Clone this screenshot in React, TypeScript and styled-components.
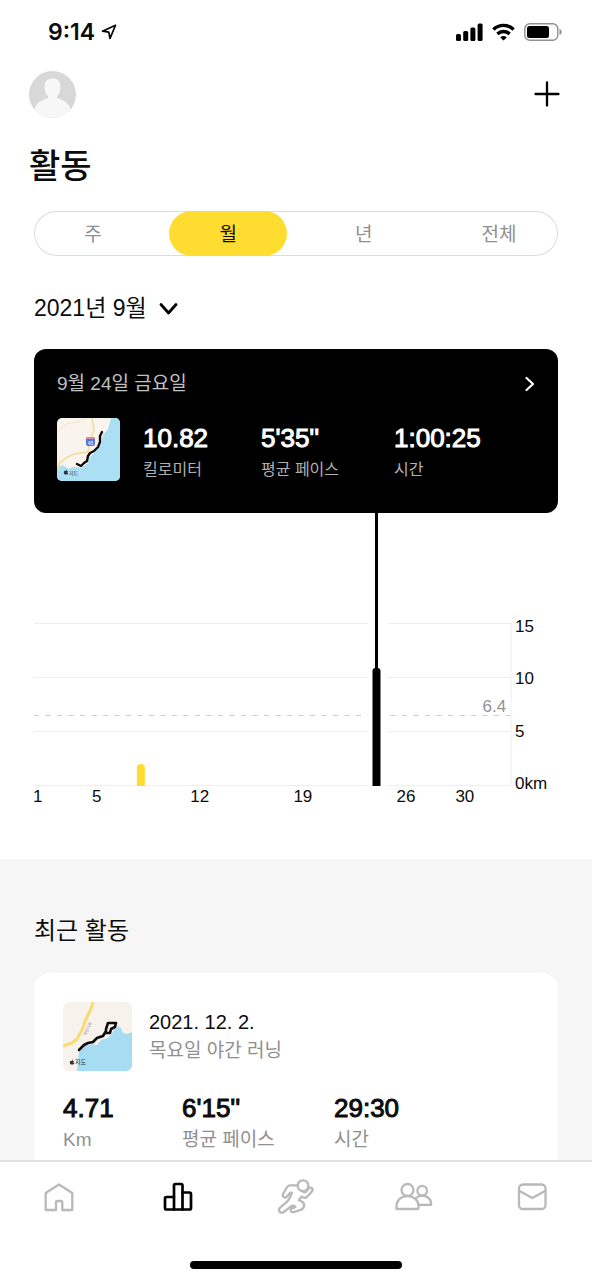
import React, { useState } from "react";
import styled, { createGlobalStyle } from "styled-components";
import { FaApple } from "react-icons/fa";

const GlobalStyle = createGlobalStyle`
  *, *::before, *::after { box-sizing: border-box; }
  body {
    margin: 0;
    background: #fff;
    color: #0c0c0c;
    font-family: "Liberation Sans", "Noto Sans CJK KR", sans-serif;
  }
  button, select { font: inherit; color: inherit; border: 0; background: none; padding: 0; margin: 0; cursor: pointer; }
  h1, h2, p, dl, dt, dd { margin: 0; font-weight: 400; }
  svg { display: block; }
`;

const Screen = styled.div`
  display: flex;
  flex-direction: column;
  height: 100vh;
`;

const StatusBar = styled.div`
  display: flex;
  flex: none;
  align-items: center;
  justify-content: space-between;
  height: 64px;
  padding: 0 30px 0 48px;
`;

const Clock = styled.div`
  display: flex;
  align-items: center;
  gap: 6px;
  font: 600 23px/32px Inter, sans-serif;
`;

const StatusIcons = styled.div`
  display: flex;
  align-items: center;
  gap: 9px;
`;

const Content = styled.main`
  flex: 1;
  min-height: 0;
  overflow-y: auto;
  scrollbar-width: none;
`;

const Header = styled.header`
  display: flex;
  align-items: center;
  justify-content: space-between;
  height: 60px;
  padding: 0 29px;
`;

const IconButton = styled.button`
  display: grid;
  place-items: center;
  border-radius: 50%;
`;

const Title = styled.h1`
  margin: 18px 29px 0;
  font-size: 34px;
  line-height: 48px;
  font-weight: 500;
`;

const Section = styled.section`
  padding: 0 34px;
`;

const Segmented = styled.div`
  display: flex;
  justify-content: space-between;
  height: 45px;
  margin-top: 21px;
  border-radius: 23px;
  box-shadow: inset 0 0 0 1px #dcdcdc;
`;

const Segment = styled.button<{ $active: boolean }>`
  width: 118px;
  padding-top: 3px;
  border-radius: 23px;
  font-size: 19px;
  line-height: 28px;
  color: ${(p) => (p.$active ? "#0c0c0c" : "#909090")};
  background: ${(p) => (p.$active ? "#ffdc30" : "transparent")};
`;

const MonthPicker = styled.label`
  display: grid;
  width: fit-content;
  align-items: center;
  justify-items: end;
  margin-top: 36px;
  & > * { grid-area: 1 / 1; }
  & > svg { pointer-events: none; }
`;

const MonthSelect = styled.select`
  appearance: none;
  height: 32px;
  padding-right: 31px;
  font-size: 23px;
  line-height: 32px;
`;

const SelectedRun = styled.article`
  margin-top: 25px;
  padding: 22px 23px 28px;
  border-radius: 12px;
  background: #000;
  color: #fff;
`;

const RunDate = styled.button`
  display: flex;
  align-items: center;
  justify-content: space-between;
  width: 100%;
  height: 26px;
  font-size: 19px;
  line-height: 26px;
  color: #c0c0c0;
`;

const RunBody = styled.div`
  display: flex;
  align-items: flex-start;
  gap: 23px;
  margin-top: 21px;
`;

const Stats = styled.dl<{ $columns: string }>`
  display: grid;
  flex: 1;
  grid-template-columns: ${(p) => p.$columns};
`;

const Stat = styled.div`
  display: flex;
  flex-direction: column-reverse;
  gap: 1px;
  padding-top: 4px;
`;

const StatValue = styled.dd`
  font-size: 26px;
  line-height: 32px;
  -webkit-text-stroke: 1px currentColor;
`;

const StatLabel = styled.dt<{ $large?: boolean }>`
  font-size: ${(p) => (p.$large ? 19 : 16)}px;
  line-height: 30px;
  color: ${(p) => (p.$large ? "#909090" : "#b0b0b0")};
`;

const Chart = styled.div`
  display: flex;
  height: 346px;
  font-size: 17px;
`;

const Plot = styled.svg`
  flex: 1;
  min-width: 0;
  height: 300px;
  overflow: visible;
`;

const YAxis = styled.div`
  display: flex;
  flex-direction: column;
  justify-content: space-between;
  width: 47px;
  height: 177px;
  margin-top: 104px;
  padding-left: 4px;
  line-height: 20px;
`;

const Recent = styled.section`
  padding: 53px 34px 40px;
  background: #f6f6f6;
`;

const RecentTitle = styled.h2`
  font-size: 24px;
  line-height: 38px;
`;

const ActivityCard = styled.article`
  margin-top: 23px;
  padding: 29px 29px 32px;
  border-radius: 16px;
  background: #fff;
`;

const ActivityHead = styled.div`
  display: flex;
  align-items: center;
  gap: 17px;
  margin-bottom: 17px;
`;

const ActivityDate = styled.p`
  font-size: 20px;
  line-height: 28px;
`;

const ActivityName = styled.p`
  font-size: 19px;
  line-height: 30px;
  color: #909090;
`;

const TabBar = styled.footer`
  flex: none;
  height: 120px;
  border-top: 2px solid #e2e2e2;
  background: #fff;
`;

const Tabs = styled.nav`
  display: grid;
  grid-template-columns: repeat(5, 1fr);
  height: 70px;
`;

const Tab = styled.button<{ $active?: boolean }>`
  display: grid;
  place-items: center;
  color: ${(p) => (p.$active ? "#000" : "#b9b9b9")};
`;

const HomeIndicator = styled.div`
  width: 212px;
  height: 8px;
  margin: 29px auto 0;
  border-radius: 4px;
  background: #000;
`;

function StatusGlyphs() {
  return (
    <StatusIcons>
      <svg width="27" height="18" viewBox="0 0 27 18">
        <rect x="0" y="11" width="5" height="7" rx="1.5" />
        <rect x="7.2" y="8" width="5" height="10" rx="1.5" />
        <rect x="14.4" y="4.5" width="5" height="13.5" rx="1.5" />
        <rect x="21.6" y="0.5" width="5" height="17.5" rx="1.5" />
      </svg>
      <svg width="23" height="18" viewBox="0 0 23 18" fill="none" stroke="#000" strokeWidth="3.4">
        <path d="M1.4 6.5a14.4 14.4 0 0 1 20.2 0" />
        <path d="M5.4 11a8.8 8.8 0 0 1 12.2 0" />
        <path d="M11.5 17.4 8.3 14.4a4.6 4.6 0 0 1 6.4 0Z" fill="#000" stroke="none" />
      </svg>
      <svg width="38" height="18" viewBox="0 0 38 18">
        <rect x="0.8" y="0.8" width="33" height="16.4" rx="5" fill="none" stroke="#8f8f8f" strokeWidth="1.4" />
        <rect x="3" y="3" width="22" height="12" rx="2.5" />
        <path d="M35.5 6v6c1.4-.6 2.2-1.7 2.2-3s-.8-2.4-2.2-3Z" fill="#8f8f8f" />
      </svg>
    </StatusIcons>
  );
}

function CoastMap() {
  return (
    <svg width="63" height="63" viewBox="0 0 63 63" role="img" aria-label="9월 24일 경로">
      <defs>
        <clipPath id="coast"><rect width="63" height="63" rx="5" /></clipPath>
      </defs>
      <g clipPath="url(#coast)" fill="none">
        <rect width="63" height="63" fill="#f9f5ee" />
        <path d="M54 0 51 11 46 17 44 27 37 35 33 39 31 45 24 50 16 49 11 51 6 47 0 49V63H63V0Z" fill="#aadff4" />
        <path d="M35 0 37 12 33 23 31 34 24 35 17 36 9 40 3 45 0 52" stroke="#f5dea3" strokeWidth="1.8" />
        <path d="M0 14 9 6 20 4 30 0M0 41 5 45" stroke="#f7e6bd" strokeWidth="1" />
        <rect x="29" y="19" width="9" height="9" rx="2" fill="#4f78db" />
        <path d="M29 21a2 2 0 0 1 2-2h5a2 2 0 0 1 2 2Z" fill="#d98ca8" />
        <text x="33.5" y="26.5" fontSize="5" fill="#fff" textAnchor="middle">45</text>
        <path d="M45 14 43 18 43 24 41 29 37 33 33 35 31 38 30 43 27 45 24 48 20 46" stroke="#0c0c0c" strokeWidth="2.4" strokeLinecap="round" strokeLinejoin="round" />
        <FaApple x="6" y="51" size={6} color="#333" />
        <text x="12" y="56.5" fontSize="5" fill="#333">지도</text>
      </g>
    </svg>
  );
}

function BayMap() {
  return (
    <svg width="69" height="69" viewBox="0 0 69 69" role="img" aria-label="12월 2일 경로">
      <defs>
        <clipPath id="bay"><rect width="69" height="69" rx="6" /></clipPath>
      </defs>
      <g clipPath="url(#bay)" fill="none">
        <rect width="69" height="69" fill="#f7f2ec" />
        <path d="M69 30 64 32 60 31 58 26 55 24 52 27 49 31 45 36 38 38 34 43 29 42 22 44 16 50 15 58 14 69H69Z" fill="#a6ddf3" />
        <path d="M30 0 28 7 23 17 19 28 14 37 9 41 0 44" stroke="#f8db70" strokeWidth="3" />
        <text transform="translate(23 34) rotate(-66)" fontSize="4" fill="#9a8fae">해안대로</text>
        <path d="M16 48 21 43 25 41 30 40 34 36 40 34 43 29 43 27 45 21 53 21 52 25 48 27 47 31 43 31" stroke="#0c0c0c" strokeWidth="2.6" strokeLinecap="round" strokeLinejoin="round" />
        <FaApple x="6" y="57" size={6} color="#333" />
        <text x="12" y="62" fontSize="6" fill="#333">지도</text>
      </g>
    </svg>
  );
}

const AXIS_DAYS = [1, 5, 12, 19, 26, 30];
const BASE = 272;
const PX_PER_KM = 10.8;
/* Centre of a day's slot, as a share of the plot's width. */
const dayX = (day: number) => 0.8 + (day - 1) * 3.087;

function ActivityChart() {
  return (
    <Chart>
      <Plot role="img" aria-label="9월 일별 거리">
        {[0, 5, 10, 15].map((km) => (
          <line key={km} x1="0" x2="100%" y1={BASE + 0.5 - km * PX_PER_KM} y2={BASE + 0.5 - km * PX_PER_KM} stroke="#efefef" />
        ))}
        <line x1="100%" x2="100%" y1="110" y2={BASE} stroke="#efefef" />
        <line x1="0" x2="100%" y1="202.5" y2="202.5" stroke="#cccccc" strokeDasharray="5 6.5" />
        <svg x={`${dayX(8)}%`} overflow="visible">
          <path d="M-4 273V255a4 4 0 0 1 8 0V273Z" fill="#ffdc30" />
        </svg>
        <svg x={`${dayX(24)}%`} overflow="visible">
          <rect x="-9" y="100" width="20" height="173" fill="#fff" />
          <rect x="-1.5" y="0" width="3" height="160" />
          <path d="M-4 273V158a3 3 0 0 1 3-3H1a3 3 0 0 1 3 3V273Z" />
        </svg>
        <text x="99%" y="199" textAnchor="end" fill="#929292">6.4</text>
        {AXIS_DAYS.map((day) => (
          <text key={day} x={`${dayX(day)}%`} y="289" textAnchor="middle" fill="#0c0c0c">{day}</text>
        ))}
      </Plot>
      <YAxis>
        <span>15</span>
        <span>10</span>
        <span>5</span>
        <span>0km</span>
      </YAxis>
    </Chart>
  );
}

type StatItem = [value: string, label: string];

function StatList({ items, columns, large }: { items: StatItem[]; columns: string; large?: boolean }) {
  return (
    <Stats $columns={columns}>
      {items.map(([value, label]) => (
        <Stat key={label}>
          <StatLabel $large={large}>{label}</StatLabel>
          <StatValue>{value}</StatValue>
        </Stat>
      ))}
    </Stats>
  );
}

const TAB_ICONS: { label: string; width: number; art: React.ReactNode }[] = [
  {
    label: "홈",
    width: 2.3,
    art: <path d="M6.7 33V16L20 7.5 33.3 16V33H23.3V25.5a1.5 1.5 0 0 0-1.5-1.5H18.5a1.5 1.5 0 0 0-1.5 1.5V33Z" />,
  },
  {
    label: "활동",
    width: 2.7,
    art: (
      <>
        <path d="M16 20H8.5A1.5 1.5 0 0 0 7 21.500V31a1.5 1.5 0 0 0 1.5 1.5H31.5A1.5 1.5 0 0 0 33 31V17a1.5 1.5 0 0 0-1.500-1.5H24.5" />
        <path d="M16 32.5V8.5A1.5 1.5 0 0 1 17.5 7H23A1.5 1.5 0 0 1 24.5 8.5V32.5" />
      </>
    ),
  },
  {
    label: "러닝",
    width: 2.3,
    art: (
      <>
        <circle cx="27" cy="8.7" r="5.400" />
        <path d="M21 8.300H14.300Q12.300 8.300 11.200 10L7.200 16.600C5.600 19.500 9.200 21.800 11.200 19.300L14.200 15.600H16C14.800 19 13 23.200 10.300 25.400L4.400 30.300C1.300 33.200 4 37.200 7.800 35L15 29.300C16.200 28.400 18.600 28.600 19.400 29.800C19 31 16 30.800 15 32.200C14 34 15.400 35.600 17.800 35.100L24 33.200C28.600 31.600 29.400 26.800 26 24.800L22.800 23L25.800 19.500C28 21.600 30 21 31.500 19.200L35.800 14.600C38 11.600 34.800 9.400 32.800 11.600L29.300 15.400L25.400 14" />
      </>
    ),
  },
  {
    label: "커뮤니티",
    width: 2.3,
    art: (
      <>
        <circle cx="13.5" cy="13" r="6" />
        <path d="M2.500 32V29.500C2.500 15.500 24.500 15.500 24.500 29.500V30.500a1.500 1.500 0 0 1-1.500 1.500Z" />
        <circle cx="28.200" cy="13.700" r="4.800" />
        <path d="M22 21.200C28 16.200 37.200 19 37.200 27.800H24.800" />
      </>
    ),
  },
  {
    label: "메시지",
    width: 2.3,
    art: (
      <>
        <rect x="6" y="7.500" width="26.500" height="24.500" rx="4" />
        <path d="M6.500 14 19.300 21 32 14" />
      </>
    ),
  },
];

const PERIODS = ["주", "월", "년", "전체"];

export default function App() {
  const [period, setPeriod] = useState("월");
  return (
    <Screen>
      <GlobalStyle />
      <StatusBar>
        <Clock>
          9:14
          <svg width="16" height="16" viewBox="0 0 16 16" fill="none" stroke="#000" strokeWidth="1.700" strokeLinejoin="round">
            <path d="M14.500 1.200 1.500 7.200 7.800 8.200 9 14.500Z" />
          </svg>
        </Clock>
        <StatusGlyphs />
      </StatusBar>
      <Content>
        <Header>
          <IconButton aria-label="프로필">
            <svg width="47" height="47" viewBox="0 0 47 47">
              <defs>
                <clipPath id="avatar"><circle cx="23.500" cy="23.500" r="23.500" /></clipPath>
              </defs>
              <g clipPath="url(#avatar)">
                <rect width="47" height="47" fill="#d8d8d8" />
                <path d="M15.500 16C15.500 10 18.500 7.500 23.500 7.500S31.500 10 31.500 16C31.500 20.500 29.800 23.500 28 25.200V27C34 29 41.500 32 41.500 40V47H5.500V40C5.500 32 13 29 19 27V25.200C17.200 23.500 15.500 20.500 15.500 16Z" fill="#f7f7f7" />
              </g>
            </svg>
          </IconButton>
          <IconButton aria-label="추가">
            <svg width="32" height="32" viewBox="0 0 32 32" stroke="#000" strokeWidth="2.300" strokeLinecap="round">
              <path d="M4.500 16H27.500M16 4.500V27.500" />
            </svg>
          </IconButton>
        </Header>
        <Title>활동</Title>
        <Section>
          <Segmented>
            {PERIODS.map((name) => (
              <Segment key={name} $active={name === period} aria-pressed={name === period} onClick={() => setPeriod(name)}>
                {name}
              </Segment>
            ))}
          </Segmented>
          <MonthPicker>
            <MonthSelect aria-label="월 선택">
              <option>2021년 9월</option>
            </MonthSelect>
            <svg width="20" height="20" viewBox="0 0 20 20" fill="none" stroke="#000" strokeWidth="2.800" strokeLinecap="round" strokeLinejoin="round">
              <path d="M3 6.500 10.500 15 18 6.500" />
            </svg>
          </MonthPicker>
          <SelectedRun>
            <RunDate>
              9월 24일 금요일
              <svg width="10" height="16" viewBox="0 0 10 16" fill="none" stroke="#fff" strokeWidth="2.200" strokeLinecap="round" strokeLinejoin="round">
                <path d="M1.500 2 8 8 1.500 14" />
              </svg>
            </RunDate>
            <RunBody>
              <CoastMap />
              <StatList
                columns="118px 133px 1fr"
                items={[["10.82", "킬로미터"], ["5'35''", "평균 페이스"], ["1:00:25", "시간"]]}
              />
            </RunBody>
          </SelectedRun>
          <ActivityChart />
        </Section>
        <Recent>
          <RecentTitle>최근 활동</RecentTitle>
          <ActivityCard>
            <ActivityHead>
              <BayMap />
              <div>
                <ActivityDate>2021. 12. 2.</ActivityDate>
                <ActivityName>목요일 야간 러닝</ActivityName>
              </div>
            </ActivityHead>
            <StatList
              large
              columns="119px 152px 1fr"
              items={[["4.71", "Km"], ["6'15''", "평균 페이스"], ["29:30", "시간"]]}
            />
          </ActivityCard>
        </Recent>
      </Content>
      <TabBar>
        <Tabs>
          {TAB_ICONS.map(({ label, width, art }) => (
            <Tab key={label} aria-label={label} $active={label === "활동"}>
              <svg width="40" height="40" viewBox="0 0 40 40" fill="none" stroke="currentColor" strokeWidth={width} strokeLinecap="round" strokeLinejoin="round">
                {art}
              </svg>
            </Tab>
          ))}
        </Tabs>
        <HomeIndicator />
      </TabBar>
    </Screen>
  );
}
